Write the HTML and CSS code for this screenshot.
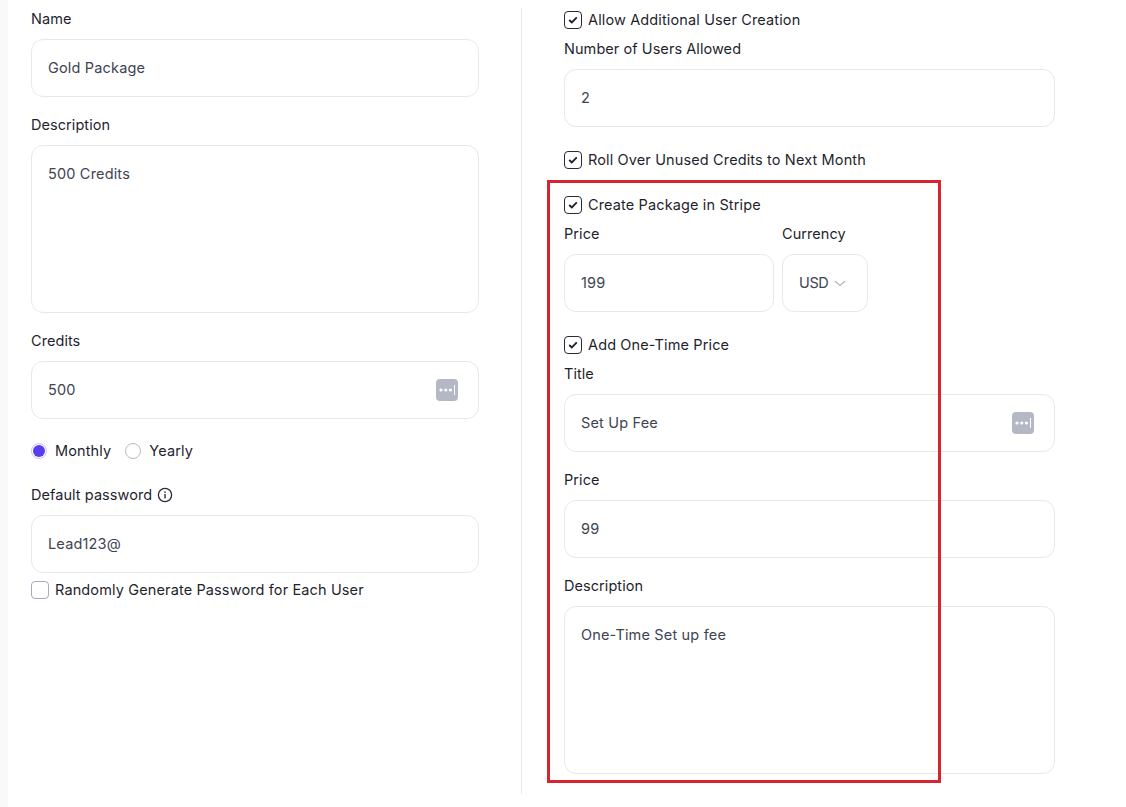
FILE: index.html
```html
<!DOCTYPE html>
<html lang="en">
<head>
<meta charset="utf-8">
<title>Package</title>
<link rel="stylesheet" href="styles.css">
</head>
<body>
<div class="page">
  <aside class="strip"></aside>
  <main class="form">
    <section class="col col-left">
      <label class="lbl">Name</label>
      <div class="field mb"><span class="val">Gold Package</span></div>
      <label class="lbl">Description</label>
      <div class="field area mb"><span class="val">500 Credits</span></div>
      <label class="lbl">Credits</label>
      <div class="field"><span class="val">500</span>
        <svg class="pw" viewBox="0 0 22 22"><rect width="22" height="22" rx="4" fill="#b4b8c4"/><circle cx="5" cy="11" r="1.6" fill="#fff"/><circle cx="9.7" cy="11" r="1.6" fill="#fff"/><circle cx="14.4" cy="11" r="1.6" fill="#fff"/><rect x="18" y="6" width="1" height="10" fill="#fff"/></svg>
      </div>
      <div class="radios">
        <span class="radio on"><i></i></span><span class="txt">Monthly</span>
        <span class="radio off"></span><span class="txt">Yearly</span>
      </div>
      <label class="lbl pwlbl">Default password
        <svg class="info" viewBox="0 0 16 16"><circle cx="8" cy="8" r="6.6" fill="none" stroke="#2b2b3b" stroke-width="1.3"/><rect x="7.3" y="7" width="1.4" height="4.4" fill="#2b2b3b"/><rect x="7.3" y="4.4" width="1.4" height="1.5" fill="#2b2b3b"/></svg>
      </label>
      <div class="field"><span class="val">Lead123@</span></div>
      <div class="check chk-rand"><span class="box empty"></span><span class="txt">Randomly Generate Password for Each User</span></div>
    </section>
    <div class="divider"></div>
    <section class="col col-right">
      <div class="check"><span class="box"><svg viewBox="0 0 10 8"><path d="M1.2 4 3.8 6.5 8.8 1.4" fill="none" stroke="#1f1f2b" stroke-width="1.8"/></svg></span><span class="txt">Allow Additional User Creation</span></div>
      <label class="lbl gap9">Number of Users Allowed</label>
      <div class="field"><span class="val">2</span></div>
      <div class="check gap23"><span class="box"><svg viewBox="0 0 10 8"><path d="M1.2 4 3.8 6.5 8.8 1.4" fill="none" stroke="#1f1f2b" stroke-width="1.8"/></svg></span><span class="txt">Roll Over Unused Credits to Next Month</span></div>
      <div class="check gap25"><span class="box"><svg viewBox="0 0 10 8"><path d="M1.2 4 3.8 6.5 8.8 1.4" fill="none" stroke="#1f1f2b" stroke-width="1.8"/></svg></span><span class="txt">Create Package in Stripe</span></div>
      <div class="price-row gap9">
        <div class="price-col">
          <label class="lbl">Price</label>
          <div class="field"><span class="val">199</span></div>
        </div>
        <div class="cur-col">
          <label class="lbl">Currency</label>
          <div class="field select"><span class="val">USD</span>
            <svg class="chev" viewBox="0 0 12 7"><path d="M1 1 6 5.6 11 1" fill="none" stroke="#a9adb6" stroke-width="1.1"/></svg>
          </div>
        </div>
      </div>
      <div class="check gap23"><span class="box"><svg viewBox="0 0 10 8"><path d="M1.2 4 3.8 6.5 8.8 1.4" fill="none" stroke="#1f1f2b" stroke-width="1.8"/></svg></span><span class="txt">Add One-Time Price</span></div>
      <label class="lbl gap9">Title</label>
      <div class="field mb"><span class="val">Set Up Fee</span>
        <svg class="pw" viewBox="0 0 22 22"><rect width="22" height="22" rx="4" fill="#b4b8c4"/><circle cx="5" cy="11" r="1.6" fill="#fff"/><circle cx="9.7" cy="11" r="1.6" fill="#fff"/><circle cx="14.4" cy="11" r="1.6" fill="#fff"/><rect x="18" y="6" width="1" height="10" fill="#fff"/></svg>
      </div>
      <label class="lbl">Price</label>
      <div class="field mb"><span class="val">99</span></div>
      <label class="lbl">Description</label>
      <div class="field area"><span class="val">One-Time Set up fee</span></div>
    </section>
  </main>
  <div class="highlight"></div>
</div>
</body>
</html>
```

FILE: styles.css
```css
* { box-sizing: border-box; }
html, body { margin: 0; height: 100%; background: #fff; overflow: hidden; }
body { font-family: Inter, "Liberation Sans", sans-serif; font-size: 14.5px; color: #1f1f2e; }
.page { position: relative; display: flex; width: 1126px; height: 807px; }
.strip { width: 8px; background: #f9f9f9; flex: none; }
.form { display: flex; padding: 8px 0 13px 23px; }
.col { display: flex; flex-direction: column; }
.col-left { width: 448px; padding-top: 1px; }
.col-right { width: 491px; padding-top: 2px; }
.divider { width: 1px; background: #e8e8ea; margin: 0 42px; }
.lbl { display: flex; align-items: center; gap: 5px; height: 20px; line-height: 20px; margin-bottom: 10px; font-weight: 400; letter-spacing: 0.06px; }
.field { position: relative; display: flex; align-items: center; justify-content: space-between; height: 58px; padding: 0 16px; border: 1px solid #e8e8ea; border-radius: 12px; background: #fff; color: #3d4452; }
.field.area { height: 168px; align-items: flex-start; padding-top: 18px; }
.field.select { justify-content: flex-start; gap: 6px; }
.field.select .val { letter-spacing: -0.4px; }
.val { line-height: 20px; letter-spacing: 0.17px; }
.mb { margin-bottom: 18px; }
.pw { width: 22px; height: 22px; margin-right: 4px; }
.txt { font-weight: 400; line-height: 20px; letter-spacing: 0.13px; }
.radios { display: flex; align-items: center; height: 20px; margin-top: 22px; margin-bottom: 24px; }
.radio { width: 16px; height: 16px; border-radius: 50%; margin-right: 8px; display: flex; align-items: center; justify-content: center; }
.radio.on { border: 1px solid #c9c5ee; }
.radio.on i { width: 12px; height: 12px; border-radius: 50%; background: #5b3df0; }
.radio.off { border: 1px solid #b9bcc4; margin-left: 14px; }
.info { width: 16px; height: 16px; }
.check { display: flex; align-items: center; gap: 6px; height: 20px; }
.box { width: 18px; height: 18px; border: 1.3px solid #2a2a36; border-radius: 4px; display: flex; align-items: center; justify-content: center; }
.box svg { width: 10px; height: 8px; }
.box.empty { border-color: #a9a8bf; }
.chk-rand { margin-top: 7px; }
.gap9 { margin-top: 9px; }
.gap23 { margin-top: 23px; }
.gap25 { margin-top: 25px; }
.price-row { display: flex; gap: 8px; }
.price-col { width: 210px; }
.cur-col { width: 86px; }
.chev { width: 12px; height: 7px; flex: none; }
.highlight { position: absolute; left: 547px; top: 180px; width: 394px; height: 603px; border: 3px solid #d9232e; pointer-events: none; }
```
